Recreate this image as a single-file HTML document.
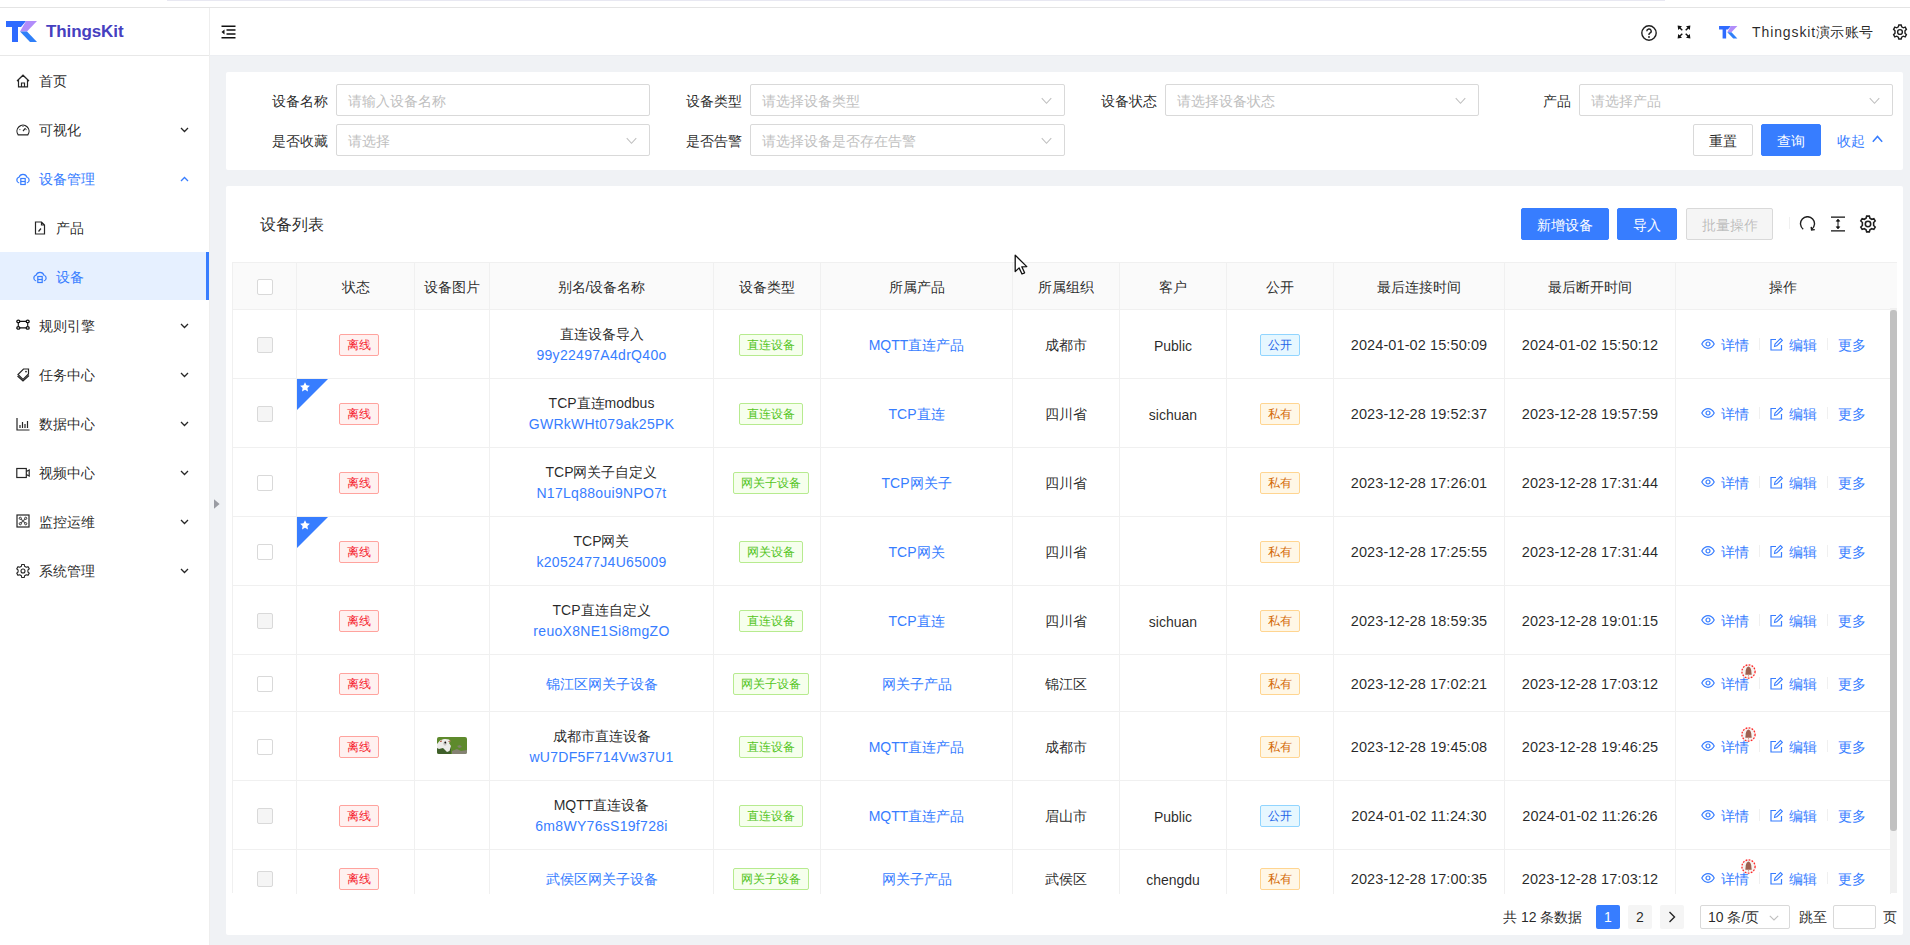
<!DOCTYPE html>
<html><head><meta charset="utf-8">
<style>
*{box-sizing:border-box;margin:0;padding:0}
html,body{width:1910px;height:945px;overflow:hidden;background:#fff;font-family:"Liberation Sans",sans-serif;font-size:14px;color:rgba(0,0,0,.85)}
.abs{position:absolute}
#topstrip{left:0;top:0;width:1910px;height:8px;background:#fff;border-bottom:1px solid #e4e4e4}
#topstrip i{position:absolute;left:167px;top:0;width:1498px;height:1px;background:#e8e8f2}
#side{left:0;top:8px;width:210px;height:937px;background:#fff;border-right:1px solid #eee}
#logo{left:0;top:0;width:209px;height:48px;border-bottom:1px solid #e8e8e8}
#header{left:210px;top:8px;width:1700px;height:48px;background:#fff;border-bottom:1px solid #eceef2}
#main{left:210px;top:56px;width:1700px;height:889px;background:#f0f2f5}
.mi{position:absolute;left:0;width:209px;height:40px;line-height:40px;font-size:14px;color:rgba(0,0,0,.85)}
.mi .ic{position:absolute;left:16px;top:13px;width:14px;height:14px}
.mi .tx{position:absolute;left:39px;top:0}
.mi .ar{position:absolute;left:180px;top:17px;width:9px;height:6px}
.card{position:absolute;background:#fff;border-radius:2px}
.lbl{position:absolute;height:32px;line-height:34px;text-align:right;font-size:14px;color:rgba(0,0,0,.85)}
.inp{position:absolute;height:32px;width:314px;border:1px solid #d9d9d9;border-radius:2px;background:#fff;line-height:32px;padding-left:11px;color:#bfbfbf;font-size:14px}
.inp .chev{position:absolute;right:12px;top:12px;width:11px;height:8px}
.btn{position:absolute;height:32px;line-height:32px;text-align:center;border-radius:2px;font-size:14px}
.btn.pri{background:#377dff;color:#fff;border:1px solid #377dff}
.btn.def{background:#fff;border:1px solid #d9d9d9;color:rgba(0,0,0,.85)}
.btn.dis{background:#f5f5f5;border:1px solid #d9d9d9;color:rgba(0,0,0,.25)}
.td{position:absolute;padding-top:3px;border-right:1px solid #f0f0f0;border-bottom:1px solid #f0f0f0;display:flex;align-items:center;justify-content:center;text-align:center;font-size:14px;color:rgba(0,0,0,.85)}
.cb{display:inline-block;width:16px;height:16px;border:1px solid #d9d9d9;border-radius:2px;background:#fff}
.cb.dis{background:#f5f5f5}
.tag{display:inline-block;margin-top:-2px;height:22px;line-height:20px;font-size:12px;padding:0 7px;border:1px solid;border-radius:2px;margin-left:8px}
.tag.red{margin-left:6px;color:#f5222d;background:#fff1f0;border-color:#ffa39e}
.tag.green{color:#52c41a;background:#f6ffed;border-color:#b7eb8f}
.tag.blue{color:#1d63e8;background:#e6f7ff;border-color:#91d5ff;margin-left:0}
.tag.orange{color:#d46b08;background:#fff7e6;border-color:#ffd591;margin-left:0}
.lk{color:#377dff}
.l2{line-height:21px;margin-top:-2px}
.star{position:absolute;left:0;top:0}
.acts{display:flex;align-items:center;color:#377dff}
.ac{position:relative;display:flex;align-items:center}
.ico{margin-right:6px;position:relative;top:-2px}
.sep{display:inline-block;width:1px;height:12px;background:#f0f0f0;margin:0 10px;position:relative;top:-2px}
.bell{position:absolute;right:-7px;top:-12px}
.pg{position:absolute;width:24px;height:24px;line-height:24px;text-align:center;border-radius:2px;background:#f5f5f5}
.pg.on{background:#377dff;color:#fff}
.dt{font-size:14.5px;letter-spacing:0.1px;position:relative;top:-1px}
.l2 .lk{letter-spacing:0.3px}
</style></head><body>
<div id="topstrip" class="abs"><i></i></div>
<div id="side" class="abs">
  <div id="logo" class="abs">
    <svg class="abs" style="left:6px;top:13px" width="32" height="22" viewBox="0 0 32 22">
      <path d="M0 0H20L15 6H12V21H6V6H0Z" fill="#2f6bff"/>
      <path d="M20 0H31L21 10.5L14 10.5Z" fill="#b18cfa"/>
      <path d="M14 10.5H21L31 21H24Z" fill="#2f7ff8"/>
    </svg>
    <div class="abs" style="left:46px;top:13px;font-size:17px;font-weight:bold;color:#4640bf;line-height:22px;letter-spacing:-0.1px">ThingsKit</div>
  </div>
<div class="mi" style="top:53px;"><svg class="ic" viewBox="0 0 14 14"><path d="M1 7L7 1.2L13 7M2.5 5.8V12.8H11.5V5.8M5.5 12.8V9H8.5V12.8" fill="none" stroke="#262626" stroke-width="1.2"/></svg><span class="tx" >首页</span></div>
<div class="mi" style="top:102px;"><svg class="ic" viewBox="0 0 14 14"><path d="M2.2 11.8A6 6 0 1 1 11.8 11.8Z" fill="none" stroke="#262626" stroke-width="1.2"/><path d="M7 8L9.5 5.2M3.5 6.5L4.3 6.8M7 3.2V4M10.5 6.5L9.7 6.8" fill="none" stroke="#262626" stroke-width="1.2"/></svg><span class="tx" >可视化</span><svg class="ar" viewBox="0 0 9 6"><path d="M1 1L4.5 4.5L8 1" fill="none" stroke="#262626" stroke-width="1.3"/></svg></div>
<div class="mi" style="top:151px;color:#377dff;"><svg class="ic" viewBox="0 0 14 14"><path d="M3.2 11A3 3 0 0 1 3 5.2A4.2 4.2 0 0 1 11 5.2A3 3 0 0 1 10.8 11" fill="none" stroke="#377dff" stroke-width="1.2"/><rect x="4.8" y="6.5" width="4.4" height="6" fill="none" stroke="#377dff" stroke-width="1.2"/><path d="M4.8 9.5H9.2" fill="none" stroke="#377dff" stroke-width="1.2"/></svg><span class="tx" >设备管理</span><svg class="ar" viewBox="0 0 9 6"><path d="M1 5L4.5 1.5L8 5" fill="none" stroke="#377dff" stroke-width="1.3"/></svg></div>
<div class="mi" style="top:200px;"><svg class="ic" style="left:33px" viewBox="0 0 14 14"><path d="M2.5 1H8.5L11.5 4V13H2.5Z M8.5 1V4H11.5" fill="none" stroke="#262626" stroke-width="1.2"/><path d="M5.5 10.5L8 7.5" fill="none" stroke="#262626" stroke-width="1.2"/></svg><span class="tx" style="left:56px">产品</span></div>
<div class="abs" style="left:0;top:244px;width:209px;height:48px;background:#e6f0ff"></div><div class="abs" style="left:206px;top:244px;width:3px;height:48px;background:#377dff"></div>
<div class="mi" style="top:249px;color:#377dff;"><svg class="ic" style="left:33px" viewBox="0 0 14 14"><path d="M3.2 11A3 3 0 0 1 3 5.2A4.2 4.2 0 0 1 11 5.2A3 3 0 0 1 10.8 11" fill="none" stroke="#377dff" stroke-width="1.2"/><rect x="4.8" y="6.5" width="4.4" height="6" fill="none" stroke="#377dff" stroke-width="1.2"/><path d="M4.8 9.5H9.2" fill="none" stroke="#377dff" stroke-width="1.2"/></svg><span class="tx" style="left:56px">设备</span></div>
<div class="mi" style="top:298px;"><svg class="ic" viewBox="0 0 14 14"><path d="M2.3 2.4H11.7M2.3 8.9H11.7M2.3 2.4V8.9M11.7 2.4V8.9" fill="none" stroke="#111" stroke-width="1.1"/><g fill="#fff" stroke="#111" stroke-width="1.3"><ellipse cx="2.3" cy="2.4" rx="1.5" ry="1.3"/><ellipse cx="11.7" cy="2.4" rx="1.5" ry="1.3"/><ellipse cx="2.3" cy="8.9" rx="1.5" ry="1.3"/><ellipse cx="11.7" cy="8.9" rx="1.5" ry="1.3"/></g></svg><span class="tx" >规则引擎</span><svg class="ar" viewBox="0 0 9 6"><path d="M1 1L4.5 4.5L8 1" fill="none" stroke="#262626" stroke-width="1.3"/></svg></div>
<div class="mi" style="top:347px;"><svg class="ic" viewBox="0 0 14 14"><path d="M7.5 1H12.5V6L7 11.5L2 6.5Z" fill="none" stroke="#262626" stroke-width="1.2"/><path d="M1.5 8L7 13L13 7.5" fill="none" stroke="#262626" stroke-width="1.2"/><circle cx="10" cy="3.6" r="0.9" fill="#262626"/></svg><span class="tx" >任务中心</span><svg class="ar" viewBox="0 0 9 6"><path d="M1 1L4.5 4.5L8 1" fill="none" stroke="#262626" stroke-width="1.3"/></svg></div>
<div class="mi" style="top:396px;"><svg class="ic" viewBox="0 0 14 14"><path d="M1 1V13H13.5" fill="none" stroke="#262626" stroke-width="1.2"/><path d="M4 11V8M6.5 11V5M9 11V7M11.5 11V4" fill="none" stroke="#262626" stroke-width="1.2"/></svg><span class="tx" >数据中心</span><svg class="ar" viewBox="0 0 9 6"><path d="M1 1L4.5 4.5L8 1" fill="none" stroke="#262626" stroke-width="1.3"/></svg></div>
<div class="mi" style="top:445px;"><svg class="ic" viewBox="0 0 14 14"><rect x="0.8" y="2.5" width="9.5" height="9" fill="none" stroke="#262626" stroke-width="1.2"/><path d="M10.3 5.5L13.2 4V10L10.3 8.5" fill="none" stroke="#262626" stroke-width="1.2"/></svg><span class="tx" >视频中心</span><svg class="ar" viewBox="0 0 9 6"><path d="M1 1L4.5 4.5L8 1" fill="none" stroke="#262626" stroke-width="1.3"/></svg></div>
<div class="mi" style="top:494px;"><svg class="ic" viewBox="0 0 14 14" style="top:12px"><rect x="1" y="1" width="12" height="12" fill="none" stroke="#262626" stroke-width="1.2"/><path d="M4.8 4.8L9.2 9.2M9.2 4.8L4.8 9.2" stroke="#555" stroke-width="1.1"/><g fill="none" stroke="#262626" stroke-width="0.9"><circle cx="4.3" cy="4.3" r="1.1"/><circle cx="9.7" cy="4.3" r="1.1"/><circle cx="4.3" cy="9.7" r="1.1"/><circle cx="9.7" cy="9.7" r="1.1"/></g></svg><span class="tx" >监控运维</span><svg class="ar" viewBox="0 0 9 6"><path d="M1 1L4.5 4.5L8 1" fill="none" stroke="#262626" stroke-width="1.3"/></svg></div>
<div class="mi" style="top:543px;"><svg class="ic" viewBox="0 0 14 14"><path d="M5.43 2.25L5.70 0.53L8.30 0.53L8.57 2.25L10.33 3.27L11.95 2.64L13.26 4.89L11.90 5.98L11.90 8.02L13.26 9.11L11.95 11.36L10.33 10.73L8.57 11.75L8.30 13.47L5.70 13.47L5.43 11.75L3.67 10.73L2.05 11.36L0.74 9.11L2.10 8.02L2.10 5.98L0.74 4.89L2.05 2.64L3.67 3.27Z" fill="none" stroke="#262626" stroke-width="1.1" stroke-linejoin="round"/><circle cx="7" cy="7" r="2" fill="none" stroke="#262626" stroke-width="1.1"/></svg><span class="tx" >系统管理</span><svg class="ar" viewBox="0 0 9 6"><path d="M1 1L4.5 4.5L8 1" fill="none" stroke="#262626" stroke-width="1.3"/></svg></div>
</div>
<div id="header" class="abs">
  <svg class="abs" style="left:11px;top:17px" width="15" height="14" viewBox="0 0 15 14">
    <path d="M0.5 1.2H14.5M5.5 5H14.5M5.5 9H14.5M0.5 12.8H14.5" stroke="#111" stroke-width="1.5"/>
    <path d="M0.5 7L3.5 4.6V9.4Z" fill="#111"/>
  </svg>
  <svg class="abs" style="left:1431px;top:17px" width="16" height="16" viewBox="0 0 16 16">
    <circle cx="8" cy="8" r="7.2" stroke="#1f1f1f" fill="none" stroke-width="1.4"/>
    <path d="M5.8 6.2A2.2 2.2 0 1 1 8.8 8.2C8.2 8.5 8 8.9 8 9.6V10" stroke="#1f1f1f" fill="none" stroke-width="1.4"/>
    <circle cx="8" cy="12" r="0.9" fill="#1f1f1f"/>
  </svg>
  <svg class="abs" style="left:1467px;top:17px" width="14" height="14" viewBox="0 0 14 14"><g fill="#111"><path d="M0.6 0.6L5 1.2L1.2 5Z"/><path d="M13.4 0.6L9 1.2L12.8 5Z"/><path d="M0.6 13.4L5 12.8L1.2 9Z"/><path d="M13.4 13.4L9 12.8L12.8 9Z"/></g><path d="M2.4 2.4L5.3 5.3M11.6 2.4L8.7 5.3M2.4 11.6L5.3 8.7M11.6 11.6L8.7 8.7" stroke="#111" stroke-width="1.4"/></svg>
  <svg class="abs" style="left:1509px;top:18px" width="19" height="13" viewBox="0 0 32 22">
    <path d="M0 0H20L15 6H12V21H6V6H0Z" fill="#2f6bff"/>
    <path d="M20 0H31L21 10.5L14 10.5Z" fill="#b18cfa"/>
    <path d="M14 10.5H21L31 21H24Z" fill="#2f7ff8"/>
  </svg>
  <div class="abs" style="left:1542px;top:13px;line-height:22px;font-size:14px;color:rgba(0,0,0,.85);letter-spacing:0.3px"><span style="letter-spacing:0.9px">Thingskit</span>演示账号</div>
  <svg class="abs" style="left:1682px;top:16px" width="16" height="16" viewBox="0 0 16 16">
    <path d="M6.8 1H9.2L9.7 2.9L11.3 3.8L13.2 3.2L14.4 5.3L13 6.7V9.3L14.4 10.7L13.2 12.8L11.3 12.2L9.7 13.1L9.2 15H6.8L6.3 13.1L4.7 12.2L2.8 12.8L1.6 10.7L3 9.3V6.7L1.6 5.3L2.8 3.2L4.7 3.8L6.3 2.9Z" stroke="#1f1f1f" fill="none" stroke-width="1.4"/>
    <circle cx="8" cy="8" r="2.4" stroke="#1f1f1f" fill="none" stroke-width="1.4"/>
  </svg>
</div>
<div id="main" class="abs">
<div class="card" style="left:16px;top:16px;width:1677px;height:98px"><div class="lbl" style="left:-18px;top:12px;width:120px">设备名称</div>
<div class="inp" style="left:110px;top:12px;width:314px">请输入设备名称</div>
<div class="lbl" style="left:396px;top:12px;width:120px">设备类型</div>
<div class="inp" style="left:524px;top:12px;width:315px">请选择设备类型<svg class="chev" viewBox="0 0 12 8"><path d="M0.8 0.8L6 6.5L11.2 0.8" fill="none" stroke="#bfbfbf" stroke-width="1.1"/></svg></div>
<div class="lbl" style="left:811px;top:12px;width:120px">设备状态</div>
<div class="inp" style="left:939px;top:12px;width:314px">请选择设备状态<svg class="chev" viewBox="0 0 12 8"><path d="M0.8 0.8L6 6.5L11.2 0.8" fill="none" stroke="#bfbfbf" stroke-width="1.1"/></svg></div>
<div class="lbl" style="left:1225px;top:12px;width:120px">产品</div>
<div class="inp" style="left:1353px;top:12px;width:314px">请选择产品<svg class="chev" viewBox="0 0 12 8"><path d="M0.8 0.8L6 6.5L11.2 0.8" fill="none" stroke="#bfbfbf" stroke-width="1.1"/></svg></div>
<div class="lbl" style="left:-18px;top:52px;width:120px">是否收藏</div>
<div class="inp" style="left:110px;top:52px;width:314px">请选择<svg class="chev" viewBox="0 0 12 8"><path d="M0.8 0.8L6 6.5L11.2 0.8" fill="none" stroke="#bfbfbf" stroke-width="1.1"/></svg></div>
<div class="lbl" style="left:396px;top:52px;width:120px">是否告警</div>
<div class="inp" style="left:524px;top:52px;width:315px">请选择设备是否存在告警<svg class="chev" viewBox="0 0 12 8"><path d="M0.8 0.8L6 6.5L11.2 0.8" fill="none" stroke="#bfbfbf" stroke-width="1.1"/></svg></div>
<div class="btn def" style="left:1467px;top:52px;width:60px">重置</div>
<div class="btn pri" style="left:1535px;top:52px;width:60px">查询</div>
<div class="abs" style="left:1611px;top:52px;line-height:34px;color:#377dff">收起</div>
<svg class="abs" style="left:1646px;top:63px" width="11" height="8" viewBox="0 0 11 8"><path d="M0.8 6.8L5.5 1.5L10.2 6.8" fill="none" stroke="#377dff" stroke-width="1.5"/></svg></div>
<!--TC--><!--TABLECARD--><div class="card" style="left:16px;top:130px;width:1677px;height:749px"><div class="abs" style="left:34px;top:27px;font-size:16px;line-height:24px;color:rgba(0,0,0,.85)">设备列表</div>
<div class="btn pri" style="left:1295px;top:22px;width:88px">新增设备</div>
<div class="btn pri" style="left:1391px;top:22px;width:60px">导入</div>
<div class="btn dis" style="left:1460px;top:22px;width:87px">批量操作</div>
<div class="abs" style="left:1563px;top:31px;width:1px;height:12px;background:#f0f0f0"></div>
<svg class="abs" style="left:1573px;top:30px" width="17" height="16" viewBox="0 0 17 16"><path d="M12.8 13.2A7 7 0 1 0 4.2 13.2" fill="none" stroke="#1f1f1f" stroke-width="1.4"/><path d="M12.2 10.8L12.6 14L15.8 13.6" fill="none" stroke="#1f1f1f" stroke-width="1.4"/></svg>
<svg class="abs" style="left:1604px;top:30px" width="16" height="16" viewBox="0 0 16 16"><path d="M1 1.2H15M1 14.8H15" fill="none" stroke="#111" stroke-width="1.2"/><path d="M8 3.5V12.5" fill="none" stroke="#111" stroke-width="1"/><path d="M6.3 5.2L8 3.2L9.7 5.2ZM6.3 10.8L8 12.8L9.7 10.8Z" fill="#111" stroke="#111" stroke-width="0.8"/></svg>
<svg class="abs" style="left:1633px;top:29px" width="18" height="18" viewBox="0 0 16 16"><path d="M6.8 1H9.2L9.7 2.9L11.3 3.8L13.2 3.2L14.4 5.3L13 6.7V9.3L14.4 10.7L13.2 12.8L11.3 12.2L9.7 13.1L9.2 15H6.8L6.3 13.1L4.7 12.2L2.8 12.8L1.6 10.7L3 9.3V6.7L1.6 5.3L2.8 3.2L4.7 3.8L6.3 2.9Z" fill="none" stroke="#1f1f1f" stroke-width="1.4"/><circle cx="8" cy="8" r="2.4" fill="none" stroke="#1f1f1f" stroke-width="1.4"/></svg>
<div class="abs" style="left:0;top:0;width:1677px;height:708px;overflow:hidden"><div class="td" style="left:7px;top:77px;width:64px;height:47px;background:#fafafa;padding-top:1px;"><span class="cb"></span></div>
<div class="td" style="left:71px;top:77px;width:118px;height:47px;background:#fafafa;padding-top:3px;">状态</div>
<div class="td" style="left:189px;top:77px;width:75px;height:47px;background:#fafafa;padding-top:3px;">设备图片</div>
<div class="td" style="left:264px;top:77px;width:224px;height:47px;background:#fafafa;padding-top:3px;">别名/设备名称</div>
<div class="td" style="left:488px;top:77px;width:107px;height:47px;background:#fafafa;padding-top:3px;">设备类型</div>
<div class="td" style="left:595px;top:77px;width:192px;height:47px;background:#fafafa;padding-top:3px;">所属产品</div>
<div class="td" style="left:787px;top:77px;width:107px;height:47px;background:#fafafa;padding-top:3px;">所属组织</div>
<div class="td" style="left:894px;top:77px;width:107px;height:47px;background:#fafafa;padding-top:3px;">客户</div>
<div class="td" style="left:1001px;top:77px;width:107px;height:47px;background:#fafafa;padding-top:3px;">公开</div>
<div class="td" style="left:1108px;top:77px;width:171px;height:47px;background:#fafafa;padding-top:3px;">最后连接时间</div>
<div class="td" style="left:1279px;top:77px;width:171px;height:47px;background:#fafafa;padding-top:3px;">最后断开时间</div>
<div class="td" style="left:1450px;top:77px;width:215px;height:47px;background:#fafafa;padding-top:3px;">操作</div>
<div class="td" style="left:1664px;top:76px;width:7px;height:47px;background:#fafafa;border-right:0"></div>
<div class="td" style="left:7px;top:124px;width:64px;height:69px;padding-top:1px;"><span class="cb dis"></span></div>
<div class="td" style="left:71px;top:124px;width:118px;height:69px;"><span class="tag red">离线</span></div>
<div class="td" style="left:189px;top:124px;width:75px;height:69px;"></div>
<div class="td" style="left:264px;top:124px;width:224px;height:69px;"><div class="l2"><div>直连设备导入</div><div class="lk">99y22497A4drQ40o</div></div></div>
<div class="td" style="left:488px;top:124px;width:107px;height:69px;"><span class="tag green">直连设备</span></div>
<div class="td" style="left:595px;top:124px;width:192px;height:69px;"><span class="lk">MQTT直连产品</span></div>
<div class="td" style="left:787px;top:124px;width:107px;height:69px;">成都市</div>
<div class="td" style="left:894px;top:124px;width:107px;height:69px;">Public</div>
<div class="td" style="left:1001px;top:124px;width:107px;height:69px;"><span class="tag blue">公开</span></div>
<div class="td" style="left:1108px;top:124px;width:171px;height:69px;"><span class="dt">2024-01-02 15:50:09</span></div>
<div class="td" style="left:1279px;top:124px;width:171px;height:69px;"><span class="dt">2024-01-02 15:50:12</span></div>
<div class="td" style="left:1450px;top:124px;width:215px;height:69px;"><div class="acts"><span class="ac"><svg class="ico" width="14" height="10" viewBox="0 0 14 10"><path d="M0.8 5C2.5 1.8 4.5 0.7 7 0.7S11.5 1.8 13.2 5C11.5 8.2 9.5 9.3 7 9.3S2.5 8.2 0.8 5Z" fill="none" stroke="#377dff" stroke-width="1.2"/><circle cx="7" cy="5" r="2" fill="none" stroke="#377dff" stroke-width="1.2"/></svg><span class="at">详情</span></span><i class="sep"></i><span class="ac"><svg class="ico" width="13" height="14" viewBox="0 0 13 14"><path d="M6 2.5H1V13H11.5V8" fill="none" stroke="#377dff" stroke-width="1.2"/><path d="M4.5 9.5L5 7L10.5 1.5L12.3 3.3L6.8 8.8Z" fill="none" stroke="#377dff" stroke-width="1.1"/></svg><span class="at">编辑</span></span><i class="sep"></i><span class="ac"><span class="at">更多</span></span></div></div>
<div class="td" style="left:7px;top:193px;width:64px;height:69px;padding-top:1px;"><span class="cb dis"></span></div>
<div class="td" style="left:71px;top:193px;width:118px;height:69px;"><span class="tag red">离线</span><svg class="star" width="31" height="31" viewBox="0 0 31 31"><path d="M0 0H31L0 31Z" fill="#377dff"/><path d="M8 3.2L9.5 6.3L12.9 6.7L10.4 9L11 12.4L8 10.7L5 12.4L5.6 9L3.1 6.7L6.5 6.3Z" fill="#fff"/></svg></div>
<div class="td" style="left:189px;top:193px;width:75px;height:69px;"></div>
<div class="td" style="left:264px;top:193px;width:224px;height:69px;"><div class="l2"><div>TCP直连modbus</div><div class="lk">GWRkWHt079ak25PK</div></div></div>
<div class="td" style="left:488px;top:193px;width:107px;height:69px;"><span class="tag green">直连设备</span></div>
<div class="td" style="left:595px;top:193px;width:192px;height:69px;"><span class="lk">TCP直连</span></div>
<div class="td" style="left:787px;top:193px;width:107px;height:69px;">四川省</div>
<div class="td" style="left:894px;top:193px;width:107px;height:69px;">sichuan</div>
<div class="td" style="left:1001px;top:193px;width:107px;height:69px;"><span class="tag orange">私有</span></div>
<div class="td" style="left:1108px;top:193px;width:171px;height:69px;"><span class="dt">2023-12-28 19:52:37</span></div>
<div class="td" style="left:1279px;top:193px;width:171px;height:69px;"><span class="dt">2023-12-28 19:57:59</span></div>
<div class="td" style="left:1450px;top:193px;width:215px;height:69px;"><div class="acts"><span class="ac"><svg class="ico" width="14" height="10" viewBox="0 0 14 10"><path d="M0.8 5C2.5 1.8 4.5 0.7 7 0.7S11.5 1.8 13.2 5C11.5 8.2 9.5 9.3 7 9.3S2.5 8.2 0.8 5Z" fill="none" stroke="#377dff" stroke-width="1.2"/><circle cx="7" cy="5" r="2" fill="none" stroke="#377dff" stroke-width="1.2"/></svg><span class="at">详情</span></span><i class="sep"></i><span class="ac"><svg class="ico" width="13" height="14" viewBox="0 0 13 14"><path d="M6 2.5H1V13H11.5V8" fill="none" stroke="#377dff" stroke-width="1.2"/><path d="M4.5 9.5L5 7L10.5 1.5L12.3 3.3L6.8 8.8Z" fill="none" stroke="#377dff" stroke-width="1.1"/></svg><span class="at">编辑</span></span><i class="sep"></i><span class="ac"><span class="at">更多</span></span></div></div>
<div class="td" style="left:7px;top:262px;width:64px;height:69px;padding-top:1px;"><span class="cb"></span></div>
<div class="td" style="left:71px;top:262px;width:118px;height:69px;"><span class="tag red">离线</span></div>
<div class="td" style="left:189px;top:262px;width:75px;height:69px;"></div>
<div class="td" style="left:264px;top:262px;width:224px;height:69px;"><div class="l2"><div>TCP网关子自定义</div><div class="lk">N17Lq88oui9NPO7t</div></div></div>
<div class="td" style="left:488px;top:262px;width:107px;height:69px;"><span class="tag green">网关子设备</span></div>
<div class="td" style="left:595px;top:262px;width:192px;height:69px;"><span class="lk">TCP网关子</span></div>
<div class="td" style="left:787px;top:262px;width:107px;height:69px;">四川省</div>
<div class="td" style="left:894px;top:262px;width:107px;height:69px;"></div>
<div class="td" style="left:1001px;top:262px;width:107px;height:69px;"><span class="tag orange">私有</span></div>
<div class="td" style="left:1108px;top:262px;width:171px;height:69px;"><span class="dt">2023-12-28 17:26:01</span></div>
<div class="td" style="left:1279px;top:262px;width:171px;height:69px;"><span class="dt">2023-12-28 17:31:44</span></div>
<div class="td" style="left:1450px;top:262px;width:215px;height:69px;"><div class="acts"><span class="ac"><svg class="ico" width="14" height="10" viewBox="0 0 14 10"><path d="M0.8 5C2.5 1.8 4.5 0.7 7 0.7S11.5 1.8 13.2 5C11.5 8.2 9.5 9.3 7 9.3S2.5 8.2 0.8 5Z" fill="none" stroke="#377dff" stroke-width="1.2"/><circle cx="7" cy="5" r="2" fill="none" stroke="#377dff" stroke-width="1.2"/></svg><span class="at">详情</span></span><i class="sep"></i><span class="ac"><svg class="ico" width="13" height="14" viewBox="0 0 13 14"><path d="M6 2.5H1V13H11.5V8" fill="none" stroke="#377dff" stroke-width="1.2"/><path d="M4.5 9.5L5 7L10.5 1.5L12.3 3.3L6.8 8.8Z" fill="none" stroke="#377dff" stroke-width="1.1"/></svg><span class="at">编辑</span></span><i class="sep"></i><span class="ac"><span class="at">更多</span></span></div></div>
<div class="td" style="left:7px;top:331px;width:64px;height:69px;padding-top:1px;"><span class="cb"></span></div>
<div class="td" style="left:71px;top:331px;width:118px;height:69px;"><span class="tag red">离线</span><svg class="star" width="31" height="31" viewBox="0 0 31 31"><path d="M0 0H31L0 31Z" fill="#377dff"/><path d="M8 3.2L9.5 6.3L12.9 6.7L10.4 9L11 12.4L8 10.7L5 12.4L5.6 9L3.1 6.7L6.5 6.3Z" fill="#fff"/></svg></div>
<div class="td" style="left:189px;top:331px;width:75px;height:69px;"></div>
<div class="td" style="left:264px;top:331px;width:224px;height:69px;"><div class="l2"><div>TCP网关</div><div class="lk">k2052477J4U65009</div></div></div>
<div class="td" style="left:488px;top:331px;width:107px;height:69px;"><span class="tag green">网关设备</span></div>
<div class="td" style="left:595px;top:331px;width:192px;height:69px;"><span class="lk">TCP网关</span></div>
<div class="td" style="left:787px;top:331px;width:107px;height:69px;">四川省</div>
<div class="td" style="left:894px;top:331px;width:107px;height:69px;"></div>
<div class="td" style="left:1001px;top:331px;width:107px;height:69px;"><span class="tag orange">私有</span></div>
<div class="td" style="left:1108px;top:331px;width:171px;height:69px;"><span class="dt">2023-12-28 17:25:55</span></div>
<div class="td" style="left:1279px;top:331px;width:171px;height:69px;"><span class="dt">2023-12-28 17:31:44</span></div>
<div class="td" style="left:1450px;top:331px;width:215px;height:69px;"><div class="acts"><span class="ac"><svg class="ico" width="14" height="10" viewBox="0 0 14 10"><path d="M0.8 5C2.5 1.8 4.5 0.7 7 0.7S11.5 1.8 13.2 5C11.5 8.2 9.5 9.3 7 9.3S2.5 8.2 0.8 5Z" fill="none" stroke="#377dff" stroke-width="1.2"/><circle cx="7" cy="5" r="2" fill="none" stroke="#377dff" stroke-width="1.2"/></svg><span class="at">详情</span></span><i class="sep"></i><span class="ac"><svg class="ico" width="13" height="14" viewBox="0 0 13 14"><path d="M6 2.5H1V13H11.5V8" fill="none" stroke="#377dff" stroke-width="1.2"/><path d="M4.5 9.5L5 7L10.5 1.5L12.3 3.3L6.8 8.8Z" fill="none" stroke="#377dff" stroke-width="1.1"/></svg><span class="at">编辑</span></span><i class="sep"></i><span class="ac"><span class="at">更多</span></span></div></div>
<div class="td" style="left:7px;top:400px;width:64px;height:69px;padding-top:1px;"><span class="cb dis"></span></div>
<div class="td" style="left:71px;top:400px;width:118px;height:69px;"><span class="tag red">离线</span></div>
<div class="td" style="left:189px;top:400px;width:75px;height:69px;"></div>
<div class="td" style="left:264px;top:400px;width:224px;height:69px;"><div class="l2"><div>TCP直连自定义</div><div class="lk">reuoX8NE1Si8mgZO</div></div></div>
<div class="td" style="left:488px;top:400px;width:107px;height:69px;"><span class="tag green">直连设备</span></div>
<div class="td" style="left:595px;top:400px;width:192px;height:69px;"><span class="lk">TCP直连</span></div>
<div class="td" style="left:787px;top:400px;width:107px;height:69px;">四川省</div>
<div class="td" style="left:894px;top:400px;width:107px;height:69px;">sichuan</div>
<div class="td" style="left:1001px;top:400px;width:107px;height:69px;"><span class="tag orange">私有</span></div>
<div class="td" style="left:1108px;top:400px;width:171px;height:69px;"><span class="dt">2023-12-28 18:59:35</span></div>
<div class="td" style="left:1279px;top:400px;width:171px;height:69px;"><span class="dt">2023-12-28 19:01:15</span></div>
<div class="td" style="left:1450px;top:400px;width:215px;height:69px;"><div class="acts"><span class="ac"><svg class="ico" width="14" height="10" viewBox="0 0 14 10"><path d="M0.8 5C2.5 1.8 4.5 0.7 7 0.7S11.5 1.8 13.2 5C11.5 8.2 9.5 9.3 7 9.3S2.5 8.2 0.8 5Z" fill="none" stroke="#377dff" stroke-width="1.2"/><circle cx="7" cy="5" r="2" fill="none" stroke="#377dff" stroke-width="1.2"/></svg><span class="at">详情</span></span><i class="sep"></i><span class="ac"><svg class="ico" width="13" height="14" viewBox="0 0 13 14"><path d="M6 2.5H1V13H11.5V8" fill="none" stroke="#377dff" stroke-width="1.2"/><path d="M4.5 9.5L5 7L10.5 1.5L12.3 3.3L6.8 8.8Z" fill="none" stroke="#377dff" stroke-width="1.1"/></svg><span class="at">编辑</span></span><i class="sep"></i><span class="ac"><span class="at">更多</span></span></div></div>
<div class="td" style="left:7px;top:469px;width:64px;height:57px;padding-top:1px;"><span class="cb"></span></div>
<div class="td" style="left:71px;top:469px;width:118px;height:57px;"><span class="tag red">离线</span></div>
<div class="td" style="left:189px;top:469px;width:75px;height:57px;"></div>
<div class="td" style="left:264px;top:469px;width:224px;height:57px;"><span class="lk">锦江区网关子设备</span></div>
<div class="td" style="left:488px;top:469px;width:107px;height:57px;"><span class="tag green">网关子设备</span></div>
<div class="td" style="left:595px;top:469px;width:192px;height:57px;"><span class="lk">网关子产品</span></div>
<div class="td" style="left:787px;top:469px;width:107px;height:57px;">锦江区</div>
<div class="td" style="left:894px;top:469px;width:107px;height:57px;"></div>
<div class="td" style="left:1001px;top:469px;width:107px;height:57px;"><span class="tag orange">私有</span></div>
<div class="td" style="left:1108px;top:469px;width:171px;height:57px;"><span class="dt">2023-12-28 17:02:21</span></div>
<div class="td" style="left:1279px;top:469px;width:171px;height:57px;"><span class="dt">2023-12-28 17:03:12</span></div>
<div class="td" style="left:1450px;top:469px;width:215px;height:57px;"><div class="acts"><span class="ac"><svg class="ico" width="14" height="10" viewBox="0 0 14 10"><path d="M0.8 5C2.5 1.8 4.5 0.7 7 0.7S11.5 1.8 13.2 5C11.5 8.2 9.5 9.3 7 9.3S2.5 8.2 0.8 5Z" fill="none" stroke="#377dff" stroke-width="1.2"/><circle cx="7" cy="5" r="2" fill="none" stroke="#377dff" stroke-width="1.2"/></svg><span class="at">详情</span><svg class="bell" width="15" height="15" viewBox="0 0 15 15"><circle cx="7.5" cy="7.5" r="6.6" fill="#f6f4f2" stroke="#ff2a2a" stroke-width="1.3" stroke-dasharray="1.8 1.3"/><path d="M4.3 10.8L4.8 6.3C5 4.6 6.2 2.8 7.5 2.6C8.8 2.8 10 4.6 10.2 6.3L10.7 10.8Z" fill="#9e6050"/><path d="M7.5 10.8V12.5" stroke="#e6a090" stroke-width="1"/></svg></span><i class="sep"></i><span class="ac"><svg class="ico" width="13" height="14" viewBox="0 0 13 14"><path d="M6 2.5H1V13H11.5V8" fill="none" stroke="#377dff" stroke-width="1.2"/><path d="M4.5 9.5L5 7L10.5 1.5L12.3 3.3L6.8 8.8Z" fill="none" stroke="#377dff" stroke-width="1.1"/></svg><span class="at">编辑</span></span><i class="sep"></i><span class="ac"><span class="at">更多</span></span></div></div>
<div class="td" style="left:7px;top:526px;width:64px;height:69px;padding-top:1px;"><span class="cb"></span></div>
<div class="td" style="left:71px;top:526px;width:118px;height:69px;"><span class="tag red">离线</span></div>
<div class="td" style="left:189px;top:526px;width:75px;height:69px;"><svg width="30" height="17" viewBox="0 0 30 17" style="display:block;margin:0 auto;position:relative;top:-2px"><defs><clipPath id="cp"><rect width="30" height="17" rx="2"/></clipPath></defs><g clip-path="url(#cp)"><rect width="30" height="17" fill="#5e8a2c"/><rect x="0" y="9" width="14" height="8" fill="#3f5f2a"/><path d="M15 14L20 12L24 14L30 13V17H15Z" fill="#8e7f86" opacity=".8"/><path d="M20 9L23 8L25 10L22 11Z" fill="#8e7f86" opacity=".7"/><path d="M3 3.5C5 2 9 1.5 12 2.5L13.5 4L12 6L14 9L12.5 14L10 15L8 13L6 11L2 12L0 11V7Z" fill="#ecebe8"/><path d="M6 6L8 4.5L10 6L9 8.5L7 8.5Z" fill="#c9c5c2"/><circle cx="8.3" cy="5.5" r="0.9" fill="#111"/><path d="M3 4.5L5 4M11.5 4.5L13.5 4" stroke="#b0503a" stroke-width="1"/></g></svg></div>
<div class="td" style="left:264px;top:526px;width:224px;height:69px;"><div class="l2"><div>成都市直连设备</div><div class="lk">wU7DF5F714Vw37U1</div></div></div>
<div class="td" style="left:488px;top:526px;width:107px;height:69px;"><span class="tag green">直连设备</span></div>
<div class="td" style="left:595px;top:526px;width:192px;height:69px;"><span class="lk">MQTT直连产品</span></div>
<div class="td" style="left:787px;top:526px;width:107px;height:69px;">成都市</div>
<div class="td" style="left:894px;top:526px;width:107px;height:69px;"></div>
<div class="td" style="left:1001px;top:526px;width:107px;height:69px;"><span class="tag orange">私有</span></div>
<div class="td" style="left:1108px;top:526px;width:171px;height:69px;"><span class="dt">2023-12-28 19:45:08</span></div>
<div class="td" style="left:1279px;top:526px;width:171px;height:69px;"><span class="dt">2023-12-28 19:46:25</span></div>
<div class="td" style="left:1450px;top:526px;width:215px;height:69px;"><div class="acts"><span class="ac"><svg class="ico" width="14" height="10" viewBox="0 0 14 10"><path d="M0.8 5C2.5 1.8 4.5 0.7 7 0.7S11.5 1.8 13.2 5C11.5 8.2 9.5 9.3 7 9.3S2.5 8.2 0.8 5Z" fill="none" stroke="#377dff" stroke-width="1.2"/><circle cx="7" cy="5" r="2" fill="none" stroke="#377dff" stroke-width="1.2"/></svg><span class="at">详情</span><svg class="bell" width="15" height="15" viewBox="0 0 15 15"><circle cx="7.5" cy="7.5" r="6.6" fill="#f6f4f2" stroke="#ff2a2a" stroke-width="1.3" stroke-dasharray="1.8 1.3"/><path d="M4.3 10.8L4.8 6.3C5 4.6 6.2 2.8 7.5 2.6C8.8 2.8 10 4.6 10.2 6.3L10.7 10.8Z" fill="#9e6050"/><path d="M7.5 10.8V12.5" stroke="#e6a090" stroke-width="1"/></svg></span><i class="sep"></i><span class="ac"><svg class="ico" width="13" height="14" viewBox="0 0 13 14"><path d="M6 2.5H1V13H11.5V8" fill="none" stroke="#377dff" stroke-width="1.2"/><path d="M4.5 9.5L5 7L10.5 1.5L12.3 3.3L6.8 8.8Z" fill="none" stroke="#377dff" stroke-width="1.1"/></svg><span class="at">编辑</span></span><i class="sep"></i><span class="ac"><span class="at">更多</span></span></div></div>
<div class="td" style="left:7px;top:595px;width:64px;height:69px;padding-top:1px;"><span class="cb dis"></span></div>
<div class="td" style="left:71px;top:595px;width:118px;height:69px;"><span class="tag red">离线</span></div>
<div class="td" style="left:189px;top:595px;width:75px;height:69px;"></div>
<div class="td" style="left:264px;top:595px;width:224px;height:69px;"><div class="l2"><div>MQTT直连设备</div><div class="lk">6m8WY76sS19f728i</div></div></div>
<div class="td" style="left:488px;top:595px;width:107px;height:69px;"><span class="tag green">直连设备</span></div>
<div class="td" style="left:595px;top:595px;width:192px;height:69px;"><span class="lk">MQTT直连产品</span></div>
<div class="td" style="left:787px;top:595px;width:107px;height:69px;">眉山市</div>
<div class="td" style="left:894px;top:595px;width:107px;height:69px;">Public</div>
<div class="td" style="left:1001px;top:595px;width:107px;height:69px;"><span class="tag blue">公开</span></div>
<div class="td" style="left:1108px;top:595px;width:171px;height:69px;"><span class="dt">2024-01-02 11:24:30</span></div>
<div class="td" style="left:1279px;top:595px;width:171px;height:69px;"><span class="dt">2024-01-02 11:26:26</span></div>
<div class="td" style="left:1450px;top:595px;width:215px;height:69px;"><div class="acts"><span class="ac"><svg class="ico" width="14" height="10" viewBox="0 0 14 10"><path d="M0.8 5C2.5 1.8 4.5 0.7 7 0.7S11.5 1.8 13.2 5C11.5 8.2 9.5 9.3 7 9.3S2.5 8.2 0.8 5Z" fill="none" stroke="#377dff" stroke-width="1.2"/><circle cx="7" cy="5" r="2" fill="none" stroke="#377dff" stroke-width="1.2"/></svg><span class="at">详情</span></span><i class="sep"></i><span class="ac"><svg class="ico" width="13" height="14" viewBox="0 0 13 14"><path d="M6 2.5H1V13H11.5V8" fill="none" stroke="#377dff" stroke-width="1.2"/><path d="M4.5 9.5L5 7L10.5 1.5L12.3 3.3L6.8 8.8Z" fill="none" stroke="#377dff" stroke-width="1.1"/></svg><span class="at">编辑</span></span><i class="sep"></i><span class="ac"><span class="at">更多</span></span></div></div>
<div class="td" style="left:7px;top:664px;width:64px;height:57px;padding-top:1px;"><span class="cb dis"></span></div>
<div class="td" style="left:71px;top:664px;width:118px;height:57px;"><span class="tag red">离线</span></div>
<div class="td" style="left:189px;top:664px;width:75px;height:57px;"></div>
<div class="td" style="left:264px;top:664px;width:224px;height:57px;"><span class="lk">武侯区网关子设备</span></div>
<div class="td" style="left:488px;top:664px;width:107px;height:57px;"><span class="tag green">网关子设备</span></div>
<div class="td" style="left:595px;top:664px;width:192px;height:57px;"><span class="lk">网关子产品</span></div>
<div class="td" style="left:787px;top:664px;width:107px;height:57px;">武侯区</div>
<div class="td" style="left:894px;top:664px;width:107px;height:57px;">chengdu</div>
<div class="td" style="left:1001px;top:664px;width:107px;height:57px;"><span class="tag orange">私有</span></div>
<div class="td" style="left:1108px;top:664px;width:171px;height:57px;"><span class="dt">2023-12-28 17:00:35</span></div>
<div class="td" style="left:1279px;top:664px;width:171px;height:57px;"><span class="dt">2023-12-28 17:03:12</span></div>
<div class="td" style="left:1450px;top:664px;width:215px;height:57px;"><div class="acts"><span class="ac"><svg class="ico" width="14" height="10" viewBox="0 0 14 10"><path d="M0.8 5C2.5 1.8 4.5 0.7 7 0.7S11.5 1.8 13.2 5C11.5 8.2 9.5 9.3 7 9.3S2.5 8.2 0.8 5Z" fill="none" stroke="#377dff" stroke-width="1.2"/><circle cx="7" cy="5" r="2" fill="none" stroke="#377dff" stroke-width="1.2"/></svg><span class="at">详情</span><svg class="bell" width="15" height="15" viewBox="0 0 15 15"><circle cx="7.5" cy="7.5" r="6.6" fill="#f6f4f2" stroke="#ff2a2a" stroke-width="1.3" stroke-dasharray="1.8 1.3"/><path d="M4.3 10.8L4.8 6.3C5 4.6 6.2 2.8 7.5 2.6C8.8 2.8 10 4.6 10.2 6.3L10.7 10.8Z" fill="#9e6050"/><path d="M7.5 10.8V12.5" stroke="#e6a090" stroke-width="1"/></svg></span><i class="sep"></i><span class="ac"><svg class="ico" width="13" height="14" viewBox="0 0 13 14"><path d="M6 2.5H1V13H11.5V8" fill="none" stroke="#377dff" stroke-width="1.2"/><path d="M4.5 9.5L5 7L10.5 1.5L12.3 3.3L6.8 8.8Z" fill="none" stroke="#377dff" stroke-width="1.1"/></svg><span class="at">编辑</span></span><i class="sep"></i><span class="ac"><span class="at">更多</span></span></div></div>
<div class="abs" style="left:1664px;top:123px;width:7px;height:584px;background:#f1f1f1"></div>
<div class="abs" style="left:1664px;top:124px;width:7px;height:521px;background:#c1c1c1;border-radius:3px"></div><div class="abs" style="left:6px;top:76px;width:1px;height:631px;background:#f0f0f0"></div><div class="abs" style="left:6px;top:76px;width:1665px;height:1px;background:#f0f0f0"></div></div>
<div class="abs" style="left:1277px;top:719px;line-height:24px">共 12 条数据</div>
<div class="pg on" style="left:1370px;top:719px">1</div>
<div class="pg" style="left:1402px;top:719px">2</div>
<div class="pg" style="left:1434px;top:719px"><svg width="8" height="12" viewBox="0 0 8 12" style="margin-top:6px"><path d="M1.5 1L6.5 6L1.5 11" fill="none" stroke="#262626" stroke-width="1.4"/></svg></div>
<div class="abs" style="left:1474px;top:719px;width:90px;height:24px;border:1px solid #d9d9d9;border-radius:2px;line-height:22px;padding-left:7px">10 条/页<svg style="position:absolute;right:10px;top:9px" width="10" height="6" viewBox="0 0 10 6"><path d="M0.8 0.8L5 5L9.2 0.8" fill="none" stroke="#bfbfbf" stroke-width="1.1"/></svg></div>
<div class="abs" style="left:1573px;top:719px;line-height:24px">跳至</div>
<div class="abs" style="left:1607px;top:719px;width:43px;height:24px;border:1px solid #d9d9d9;border-radius:2px"></div>
<div class="abs" style="left:1657px;top:719px;line-height:24px">页</div></div><!--/TABLECARD-->
</div>
<svg class="abs" style="left:213px;top:498px" width="8" height="12" viewBox="0 0 8 12"><path d="M1 1.2V10.8L6.6 6Z" fill="#9a9ca3"/></svg>
<svg class="abs" style="left:1014px;top:254px" width="14" height="21" viewBox="0 0 14 21"><path d="M1.2 1.2V17.6L5.1 13.9L8 20L10.6 18.8L7.8 12.8L12.8 12.6Z" fill="#fff" stroke="#111" stroke-width="1.3" stroke-linejoin="round"/></svg>
</body></html>
